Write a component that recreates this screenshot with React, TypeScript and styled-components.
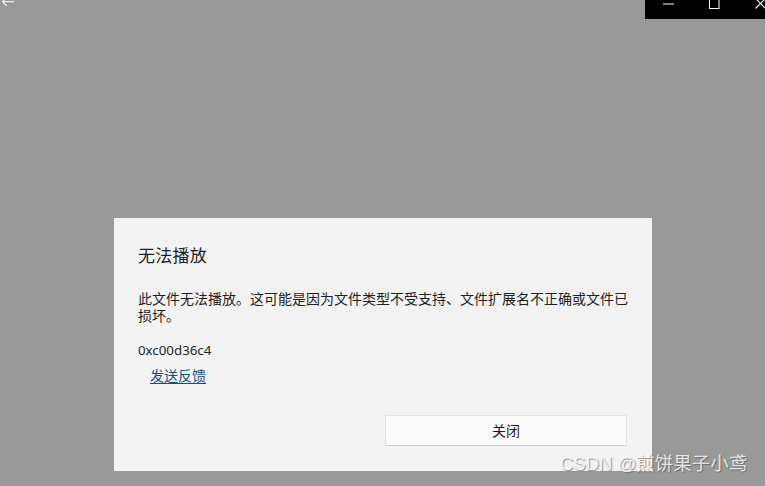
import React from 'react';
import styled, { createGlobalStyle } from 'styled-components';

const GlobalStyle = createGlobalStyle`
    html, body {
        margin: 0;
        padding: 0;
        background: #999999;
    }
`;

const cjk = `"Noto Sans CJK SC", "Noto Sans", sans-serif`;
const latin = `"Noto Sans", "Noto Sans CJK SC", sans-serif`;

const App: React.FC = () => {
    return (
        <>
            <GlobalStyle />
            <Page>
                <TitleBar>
                    <BackButton aria-label="返回">
                        <svg width="14" height="9" viewBox="0 0 14 9">
                            <path d="M1.5 2.7 H13 M1.5 2.7 L5.7 -1.5 M1.5 2.7 L5.7 6.9" stroke="#fff" strokeWidth="1.1" fill="none" />
                        </svg>
                    </BackButton>
                    <Caption>
                        <CaptionButton aria-label="最小化">
                            <svg width="11" height="10" viewBox="0 0 11 10">
                                <path d="M0 5 H11" stroke="#fff" strokeWidth="1" fill="none" />
                            </svg>
                        </CaptionButton>
                        <CaptionButton aria-label="最大化">
                            <svg width="11" height="10" viewBox="0 0 11 10">
                                <rect x="0.5" y="0.5" width="9.5" height="9" stroke="#fff" strokeWidth="1" fill="none" />
                            </svg>
                        </CaptionButton>
                        <CaptionButton aria-label="关闭">
                            <svg width="11" height="10" viewBox="0 0 11 10">
                                <path d="M0.5 -0.5 L10.5 9.5 M10.5 -0.5 L0.5 9.5" stroke="#fff" strokeWidth="1.1" fill="none" />
                            </svg>
                        </CaptionButton>
                    </Caption>
                </TitleBar>
                <Stage>
                    <Dialog>
                        <Title>无法播放</Title>
                        <Message>
                            此文件无法播放。这可能是因为文件类型不受支持、文件扩展名不正确或文件已
                            <br />
                            损坏。
                        </Message>
                        <ErrorCode>0xc00d36c4</ErrorCode>
                        <FeedbackLink href="#">发送反馈</FeedbackLink>
                        <Footer>
                            <CloseButton>关闭</CloseButton>
                        </Footer>
                    </Dialog>
                </Stage>
                <Watermark>CSDN @煎饼果子小鸢</Watermark>
            </Page>
        </>
    );
};

export default App;

const Page = styled.div`
    position: relative;
    width: 765px;
    height: 486px;
    overflow: hidden;
    background: #999999;
    display: flex;
    flex-direction: column;
`;

const TitleBar = styled.div`
    height: 19px;
    display: flex;
    justify-content: space-between;
    align-items: flex-start;
    flex-shrink: 0;
`;

const BackButton = styled.div`
    width: 14px;
    height: 9px;
    margin-left: 1px;
    margin-top: -1px;
    display: flex;
`;

const Caption = styled.div`
    width: 138px;
    height: 19px;
    margin-right: -18px;
    background: #000;
    display: flex;
    flex-shrink: 0;
`;

const CaptionButton = styled.div`
    width: 46px;
    height: 19px;
    display: flex;
    justify-content: center;
    align-items: flex-start;

    svg {
        margin-top: -1px;
    }
`;

const Stage = styled.div`
    flex: 1;
    padding: 199px 0 0 114px;
`;

const Dialog = styled.div`
    width: 538px;
    height: 253px;
    box-sizing: border-box;
    background: #f2f2f2;
    padding: 25px 25px 25px 24px;
    display: flex;
    flex-direction: column;
    align-items: flex-start;
    color: #1f1f1f;
`;

const Title = styled.h2`
    margin: 0;
    font-family: ${cjk};
    font-weight: 400;
    font-size: 17px;
    letter-spacing: 0.25px;
    line-height: 24px;
`;

const Message = styled.p`
    margin: 23px 0 0;
    width: 520px;
    white-space: nowrap;
    font-family: ${cjk};
    font-size: 14px;
    letter-spacing: 0;
    line-height: 17px;
`;

const ErrorCode = styled.div`
    margin-top: 16px;
    font-family: ${latin};
    font-size: 13.3px;
    line-height: 20px;
`;

const FeedbackLink = styled.a`
    margin: 5px 0 0 12px;
    font-family: ${cjk};
    font-size: 14px;
    line-height: 20px;
    color: #0f4f8c;
    text-decoration: underline;
    text-underline-offset: 2px;
`;

const Footer = styled.div`
    margin-top: auto;
    align-self: stretch;
    display: flex;
    justify-content: flex-end;
`;

const CloseButton = styled.button`
    width: 242px;
    height: 31px;
    background: #fafafa;
    border: 1px solid #e4e4e4;
    border-bottom-color: #d2d2d2;
    font-family: ${cjk};
    font-size: 14px;
    color: #1a1a1a;
    padding: 0 0 1px;
`;

const Watermark = styled.div`
    position: absolute;
    left: 560px;
    top: 451px;
    font-family: "Liberation Sans", "Noto Sans CJK SC", sans-serif;
    font-size: 18.5px;
    line-height: 26px;
    color: rgba(255, 255, 255, 0.78);
    text-shadow: 1px 1px 1px rgba(80, 80, 80, 0.6);
    white-space: nowrap;
`;
